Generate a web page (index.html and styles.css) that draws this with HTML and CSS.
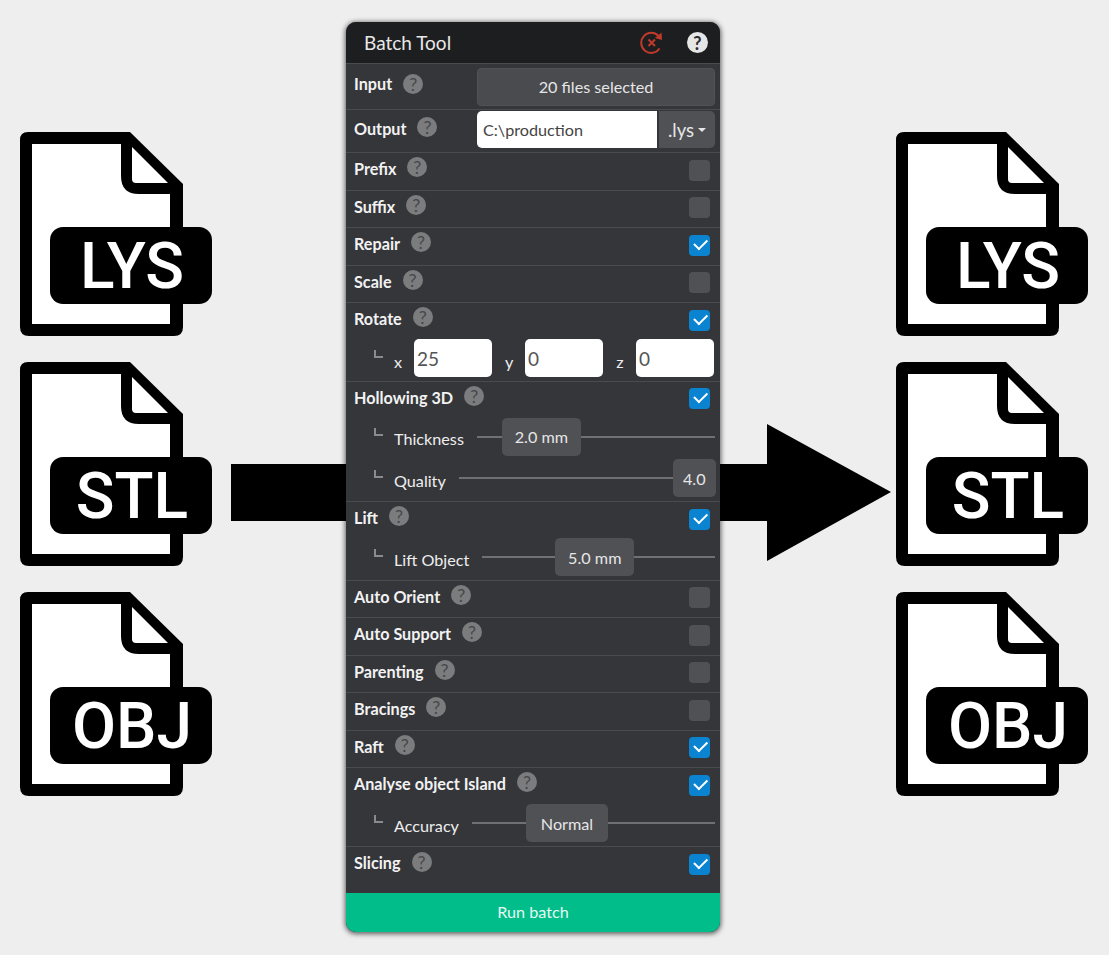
FILE: index.html
```html
<!DOCTYPE html>
<html lang="en">
<head>
    <meta charset="UTF-8">
    <meta name="viewport" content="width=device-width, initial-scale=1.0">
    <title>Batch Tool</title>
    <link rel="stylesheet" href="styles.css">
</head>
<body>
    <svg class="defs" width="0" height="0" aria-hidden="true">
        <symbol id="file" viewBox="0 0 192 204">
            <path fill="#000" d="M8 0H110L163 52V195Q163 204 154 204H9Q0 204 0 195V8Q0 0 8 0Z"/>
            <path fill="#fff" d="M12 12H101V44Q101 62 119 62H150V192H12Z"/>
            <path fill="#fff" d="M112 15L148 51H116Q112 51 112 47Z"/>
            <rect x="30" y="95" width="162" height="77" rx="13" fill="#000"/>
        </symbol>
    </svg>

    <div class="stage">
        <svg class="arrow" width="660" height="137" viewBox="0 0 660 137">
            <path fill="#000" d="M0 40H536V0L660 68L536 137V97H0Z"/>
        </svg>

        <div class="files">
            <svg class="file" viewBox="0 0 192 204"><use href="#file"/><text x="112" y="156">LYS</text></svg>
            <svg class="file" viewBox="0 0 192 204"><use href="#file"/><text x="112" y="156">STL</text></svg>
            <svg class="file" viewBox="0 0 192 204"><use href="#file"/><text x="112" y="156">OBJ</text></svg>
        </div>

        <div class="panel">
            <div class="panel-header">
                <span class="panel-title">Batch Tool</span>
                <svg class="reset-icon" width="24" height="24" viewBox="0 0 24 24">
                    <path fill="none" stroke="#c0392b" stroke-width="2" d="M19.5 17.5A10 10 0 1 1 18.5 5"/>
                    <path fill="#c0392b" d="M21.5 1.5L22 9L15 7Z"/>
                    <path fill="none" stroke="#c0392b" stroke-width="2" d="M8.5 8.5L15 15M15 8.5L8.5 15"/>
                </svg>
                <span class="help help-light">?</span>
            </div>

            <div class="row row-input">
                <span class="label">Input</span><span class="help">?</span>
                <div class="file-btn">20 files selected</div>
            </div>
            <div class="row row-output">
                <span class="label">Output</span><span class="help">?</span>
                <div class="output-group">
                    <div class="text-box">C:\production</div>
                    <div class="ext-btn">.lys<span class="caret"></span></div>
                </div>
            </div>
            <div class="row"><span class="label">Prefix</span><span class="help">?</span><span class="check"></span></div>
            <div class="row"><span class="label">Suffix</span><span class="help">?</span><span class="check"></span></div>
            <div class="row"><span class="label">Repair</span><span class="help">?</span><span class="check on"></span></div>
            <div class="row"><span class="label">Scale</span><span class="help">?</span><span class="check"></span></div>

            <div class="group">
                <div class="row"><span class="label">Rotate</span><span class="help">?</span><span class="check on"></span></div>
                <div class="sub sub-rotate">
                    <span class="elbow"></span>
                    <span class="axis">x</span><div class="num-box">25</div>
                    <span class="axis">y</span><div class="num-box">0</div>
                    <span class="axis">z</span><div class="num-box">0</div>
                </div>
            </div>

            <div class="group">
                <div class="row"><span class="label">Hollowing 3D</span><span class="help">?</span><span class="check on"></span></div>
                <div class="sub sub-tall">
                    <span class="elbow"></span><span class="sub-label">Thickness</span>
                    <div class="slider"><div class="handle" style="left: 25px; width: 79px">2.0 mm</div></div>
                </div>
                <div class="sub sub-tall">
                    <span class="elbow"></span><span class="sub-label">Quality</span>
                    <div class="slider"><div class="handle" style="left: 214px; width: 43px">4.0</div></div>
                </div>
            </div>

            <div class="group">
                <div class="row"><span class="label">Lift</span><span class="help">?</span><span class="check on"></span></div>
                <div class="sub">
                    <span class="elbow"></span><span class="sub-label">Lift Object</span>
                    <div class="slider"><div class="handle" style="left: 73px; width: 79px">5.0 mm</div></div>
                </div>
            </div>

            <div class="row"><span class="label">Auto Orient</span><span class="help">?</span><span class="check"></span></div>
            <div class="row"><span class="label">Auto Support</span><span class="help">?</span><span class="check"></span></div>
            <div class="row"><span class="label">Parenting</span><span class="help">?</span><span class="check"></span></div>
            <div class="row"><span class="label">Bracings</span><span class="help">?</span><span class="check"></span></div>
            <div class="row"><span class="label">Raft</span><span class="help">?</span><span class="check on"></span></div>

            <div class="group">
                <div class="row"><span class="label">Analyse object Island</span><span class="help">?</span><span class="check on"></span></div>
                <div class="sub">
                    <span class="elbow"></span><span class="sub-label">Accuracy</span>
                    <div class="slider"><div class="handle" style="left: 54px; width: 82px">Normal</div></div>
                </div>
            </div>

            <div class="row row-last"><span class="label">Slicing</span><span class="help">?</span><span class="check on"></span></div>

            <div class="run-btn">Run batch</div>
        </div>

        <div class="files files-right">
            <svg class="file" viewBox="0 0 192 204"><use href="#file"/><text x="112" y="156">LYS</text></svg>
            <svg class="file" viewBox="0 0 192 204"><use href="#file"/><text x="112" y="156">STL</text></svg>
            <svg class="file" viewBox="0 0 192 204"><use href="#file"/><text x="112" y="156">OBJ</text></svg>
        </div>
    </div>
</body>
</html>
```

FILE: styles.css
```css
body {
    margin: 0;
    background-color: #eeeeee;
    font-family: 'Lato', sans-serif;
    overflow: hidden;
}

.defs {
    position: absolute;
}

.stage {
    position: relative;
    display: grid;
    grid-template-columns: 346px 374px 1fr;
    height: 955px;
    padding-top: 22px;
    box-sizing: border-box;
}

.arrow {
    position: absolute;
    left: 231px;
    top: 424px;
}

.files {
    display: flex;
    flex-direction: column;
    gap: 26px;
    padding: 110px 0 0 20px;
}

.files-right {
    padding-left: 176px;
}

.file {
    display: block;
    width: 192px;
    height: 204px;
}

.file text {
    font-family: 'Roboto', sans-serif;
    font-size: 64px;
    font-weight: 500;
    fill: #fff;
    text-anchor: middle;
}

.panel {
    position: relative;
    align-self: start;
    height: 910px;
    display: flex;
    flex-direction: column;
    background-color: #35363a;
    border-radius: 10px;
    box-shadow: 0 1px 5px 1px rgba(0,0,0,0.6);
    overflow: hidden;
    color: #f0f0f0;
}

.panel-header {
    display: flex;
    align-items: center;
    height: 41px;
    padding: 0 12px 0 18px;
    background-color: #1d1e20;
    flex-shrink: 0;
}

.panel-title {
    font-size: 19px;
    color: #e8e8e8;
    flex: 1;
    margin-top: -1px;
}

.reset-icon {
    margin-right: 23px;
}

.row {
    display: flex;
    align-items: center;
    height: 37.5px;
    padding: 0 10px 0 8px;
    border-top: 1px solid #4a4b4f;
    box-sizing: border-box;
    flex-shrink: 0;
}

.label {
    font-size: 16.2px;
    font-weight: 700;
    color: #f2f2f2;
    margin-top: -5px;
}

.help {
    display: inline-flex;
    align-items: center;
    justify-content: center;
    width: 20px;
    height: 20px;
    margin: -8px auto 0 11px;
    border-radius: 50%;
    background-color: #7b7c7e;
    color: #47484b;
    font-size: 18px;
    font-weight: 400;
    flex-shrink: 0;
}

.help-light {
    margin: 0;
    width: 21px;
    height: 21px;
    background-color: #e6e6e6;
    color: #2a2b2d;
    font-weight: 700;
}

.check {
    width: 21px;
    height: 21px;
    margin-top: -2px;
    border-radius: 4px;
    background-color: #505155;
    position: relative;
    flex-shrink: 0;
}

.check.on {
    background-color: #0a84d0;
}

.check.on::after {
    content: "";
    position: absolute;
    left: 4.5px;
    top: 4px;
    width: 11px;
    height: 5.5px;
    border-left: 2px solid #fff;
    border-bottom: 2px solid #fff;
    transform: rotate(-45deg);
}

.row-input {
    height: 46px;
    padding-right: 5px;
}

.row-input .label {
    margin-top: -6px;
}

.row-input .help {
    margin-top: -6px;
}

.file-btn {
    width: 238px;
    height: 38px;
    padding-bottom: 2px;
    box-sizing: border-box;
    display: flex;
    align-items: center;
    justify-content: center;
    background-color: #4a4b4f;
    border: 1px solid #515256;
    border-radius: 4px;
    font-size: 16.2px;
    color: #e6e6e6;
    margin-top: 1px;
}

.row-output {
    height: 43px;
    padding-right: 5px;
}

.row-output .label {
    margin-top: -6px;
}

.output-group {
    display: flex;
    gap: 2px;
    height: 37px;
    margin-top: -3px;
    width: 238px;
}

.text-box {
    flex: 1;
    background-color: #fff;
    border-radius: 5px 0 0 5px;
    padding-left: 6px;
    display: flex;
    align-items: center;
    color: #444;
    font-size: 16.2px;
}

.ext-btn {
    width: 56px;
    background-color: #505155;
    border-radius: 0 5px 5px 0;
    display: flex;
    align-items: center;
    justify-content: center;
    font-size: 18.5px;
    color: #e6e6e6;
}

.caret {
    width: 0;
    height: 0;
    margin-left: 4px;
    border-left: 4px solid transparent;
    border-right: 4px solid transparent;
    border-top: 4px solid #e6e6e6;
}

.sub {
    display: flex;
    align-items: center;
    height: 41px;
    padding: 0 5px 0 28px;
    box-sizing: border-box;
}

.sub-tall {
    height: 41.5px;
}

.elbow {
    width: 9px;
    height: 8px;
    margin: -13px 11px 0 0;
    border-left: 2px solid #8a8b8e;
    border-bottom: 2px solid #8a8b8e;
    box-sizing: border-box;
    flex-shrink: 0;
}

.sub-label {
    font-size: 16.2px;
    color: #eeeeee;
    margin: 0 13px 0 0;
    white-space: nowrap;
}

.slider {
    position: relative;
    flex: 1;
    height: 2px;
    margin-top: -4px;
    background-color: #6f7073;
}

.handle {
    position: absolute;
    top: -18px;
    height: 38px;
    background-color: #505155;
    border-radius: 5px;
    display: flex;
    align-items: center;
    justify-content: center;
    font-size: 16.2px;
    color: #e6e6e6;
}

.sub-rotate {
    padding-right: 6px;
}

.axis {
    font-size: 16.2px;
    color: #eeeeee;
    margin-top: 3px;
    width: 8px;
    text-align: center;
    flex-shrink: 0;
}

.sub-rotate .axis + .num-box {
    margin-left: 12px;
    margin-right: 13px;
}

.sub-rotate .num-box:last-child {
    margin-right: 0;
}

.num-box {
    flex: 1;
    height: 38px;
    margin-top: -4px;
    background-color: #fff;
    border-radius: 5px;
    padding-left: 3px;
    display: flex;
    align-items: center;
    color: #555;
    font-size: 19px;
}

.row-last {
    height: 47px;
    padding-bottom: 9px;
}

.row-last .label {
    margin-top: -6px;
}

.row-last .help {
    margin-top: -6px;
}

.run-btn {
    margin-top: auto;
    height: 39px;
    padding-bottom: 2px;
    box-sizing: border-box;
    background-color: #00bd8a;
    display: flex;
    align-items: center;
    justify-content: center;
    font-size: 16.2px;
    color: #e8f8f2;
}
```
